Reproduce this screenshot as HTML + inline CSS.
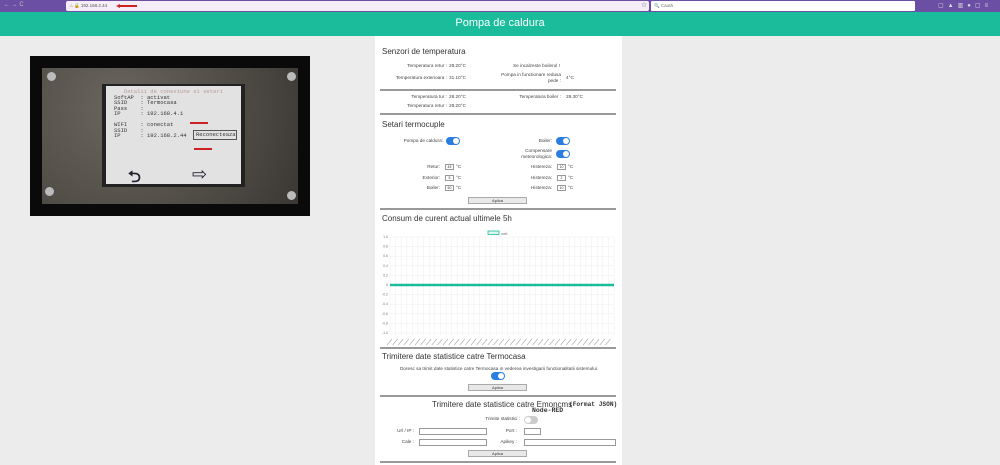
<!DOCTYPE html>
<html><head><meta charset="utf-8"><style>
*{margin:0;padding:0;box-sizing:border-box}
body{width:1000px;height:465px;overflow:hidden;background:#ececec;font-family:"Liberation Sans",Arial,sans-serif;position:relative;color:#333}
.a{position:absolute;white-space:nowrap}
.s{font-size:4.7px;color:#444}
.r{text-align:right}
.h{font-size:8px;color:#333}
.hr{position:absolute;left:380px;width:236px;height:1.5px;background:#999}
.tg{position:absolute;width:14px;height:8px;border-radius:4px;background:#2b7de1}
.tg::after{content:"";position:absolute;right:1px;top:1px;width:6px;height:6px;border-radius:50%;background:#fff}
.tg.off{background:#ccc}.tg.off::after{right:auto;left:1px}
.in{position:absolute;height:6px;border:1px solid #999;background:#fff;font-size:3.5px;text-align:center;line-height:4.5px}
.btn{position:absolute;width:59px;height:7px;background:#e8e8e8;border:1px solid #aaa;font-size:4px;text-align:center;line-height:5px}
</style></head><body>
<div class="a" style="left:0;top:0;width:1000px;height:12px;background:#6b4fa5"></div>
<div class="a" style="left:4px;top:2px;font-size:6px;color:#cbb">← → C</div>
<div class="a" style="left:66px;top:1px;width:583px;height:10px;background:#f5eef8;border-radius:2px"></div>
<div class="a" style="left:70px;top:3px;font-size:4.5px;color:#555">⌂ 🔒 192.168.2.44</div>
<div class="a" style="left:120px;top:5px;width:17px;height:1.5px;background:#c22"></div>
<div class="a" style="left:116px;top:3.5px;width:0;height:0;border-top:2.3px solid transparent;border-bottom:2.3px solid transparent;border-right:4px solid #c22"></div>
<div class="a" style="left:641px;top:1px;font-size:7px;color:#555">☆</div>
<div class="a" style="left:651px;top:1px;width:264px;height:10px;background:#fff;border-radius:1px"></div>
<div class="a" style="left:654px;top:3px;font-size:4.5px;color:#777">🔍 Caută</div>
<div class="a" style="left:938px;top:2px;font-size:6px;color:#ddd;letter-spacing:4px">▢▲▥●▢≡</div>
<div class="a" style="left:0;top:12px;width:1000px;height:24px;background:#1abc9c"></div>
<div class="a" style="left:0;top:17px;width:1000px;text-align:center;font-size:11px;color:#fff">Pompa de caldura</div>
<div class="a" style="left:375px;top:36px;width:247px;height:429px;background:#fff"></div>

<!-- photo -->
<div class="a" style="left:30px;top:56px;width:280px;height:160px;background:#0a0a0a"></div>
<div class="a" style="left:42px;top:68px;width:256px;height:136px;background:radial-gradient(circle at 30% 30%,#6a665f,#4a4640 70%,#3a3734)"></div>
<div class="a" style="left:47px;top:72px;width:9px;height:9px;border-radius:50%;background:#bbb"></div>
<div class="a" style="left:287px;top:72px;width:9px;height:9px;border-radius:50%;background:#bbb"></div>
<div class="a" style="left:45px;top:187px;width:9px;height:9px;border-radius:50%;background:#bbb"></div>
<div class="a" style="left:287px;top:191px;width:9px;height:9px;border-radius:50%;background:#bbb"></div>
<div class="a" style="left:102px;top:84px;width:143px;height:103px;background:#222;"></div>
<div class="a" style="left:106px;top:86px;width:135px;height:98px;background:#e2e2e2;font-family:'Liberation Mono',monospace;font-size:5.5px;line-height:5.5px;color:#333;padding:3px 8px;white-space:pre">   <span style="color:#b99">Detalii de conexiune si setari</span>
SoftAP  : activat
SSID    : Termocasa
Pass    :
IP      : 192.168.4.1

WIFI    : conectat
SSID    :
IP      : 192.168.2.44</div>
<div class="a" style="left:193px;top:130px;width:44px;height:10px;border:1px solid #555;font-family:'Liberation Mono',monospace;font-size:5.5px;line-height:8px;padding-left:2px;color:#333">Reconecteaza</div>
<div class="a" style="left:190px;top:122px;width:18px;height:1.5px;background:#c22"></div>
<div class="a" style="left:194px;top:148px;width:18px;height:1.5px;background:#c22"></div>
<div class="a" style="left:128px;top:166px;font-size:16px;color:#223;font-weight:bold">⮌</div>
<div class="a" style="left:192px;top:164px;font-size:18px;color:#223">⇨</div>

<!-- section 1 -->
<div class="a h" style="left:382px;top:47px">Senzori de temperatura</div>
<div class="a s r" style="left:380px;top:63px;width:67px">Temperatura retur :</div><div class="a s" style="left:449px;top:63px">28.20°C</div>
<div class="a s" style="left:513px;top:63px">Se incalzeste boilerul !</div>
<div class="a s r" style="left:380px;top:75px;width:67px">Temperatura exterioara :</div><div class="a s" style="left:449px;top:75px">31.10°C</div>
<div class="a s r" style="left:490px;top:72px;width:71px;line-height:6px;white-space:normal">Pompa in functionare redusa pede :</div><div class="a s" style="left:566px;top:75px">4°C</div>
<div class="hr" style="top:89px"></div>
<div class="a s r" style="left:380px;top:94px;width:67px">Temperatura tur :</div><div class="a s" style="left:449px;top:94px">28.20°C</div>
<div class="a s r" style="left:490px;top:94px;width:71px">Temperatura boiler :</div><div class="a s" style="left:566px;top:94px">28.30°C</div>
<div class="a s r" style="left:380px;top:103px;width:67px">Temperatura retur :</div><div class="a s" style="left:449px;top:103px">28.20°C</div>
<div class="hr" style="top:113px"></div>

<div class="a h" style="left:382px;top:120px">Setari termocuple</div>
<div class="a s r" style="left:380px;top:138px;width:63px">Pompa de caldura:</div><div class="tg" style="left:446px;top:137px"></div>
<div class="a s r" style="left:500px;top:138px;width:52px">Boiler:</div><div class="tg" style="left:556px;top:137px"></div>
<div class="a s r" style="left:500px;top:148px;width:52px;line-height:6px">Compensare<br>meteorologica:</div><div class="tg" style="left:556px;top:150px"></div>
<div class="a s r" style="left:400px;top:164px;width:40px">Retur:</div><div class="in" style="left:445px;top:164px;width:9px">45</div><div class="a s" style="left:456px;top:164px">°C</div>
<div class="a s r" style="left:400px;top:175px;width:40px">Exterior:</div><div class="in" style="left:445px;top:175px;width:9px">5</div><div class="a s" style="left:456px;top:175px">°C</div>
<div class="a s r" style="left:400px;top:185px;width:40px">Boiler:</div><div class="in" style="left:445px;top:185px;width:9px">50</div><div class="a s" style="left:456px;top:185px">°C</div>
<div class="a s r" style="left:510px;top:164px;width:42px">Histereza:</div><div class="in" style="left:557px;top:164px;width:9px">10</div><div class="a s" style="left:568px;top:164px">°C</div>
<div class="a s r" style="left:510px;top:175px;width:42px">Histereza:</div><div class="in" style="left:557px;top:175px;width:9px">2</div><div class="a s" style="left:568px;top:175px">°C</div>
<div class="a s r" style="left:510px;top:185px;width:42px">Histereza:</div><div class="in" style="left:557px;top:185px;width:9px">10</div><div class="a s" style="left:568px;top:185px">°C</div>
<div class="btn" style="left:468px;top:197px">Aplica</div>
<div class="hr" style="top:208px"></div>

<div class="a h" style="left:382px;top:214px">Consum de curent actual ultimele 5h</div>
<svg class="a" style="left:375px;top:228px" width="247" height="118" viewBox="0 0 247 118">
<rect x="113" y="3" width="11" height="3.5" fill="#e0f5f0" stroke="#1abc9c" stroke-width="0.8"/>
<text x="126" y="7" font-size="3.5" fill="#777" font-family="Liberation Sans">watt</text>
<g stroke="#eee" stroke-width="0.5">
<path d="M15 9H239M15 18.6H239M15 28.2H239M15 37.8H239M15 47.4H239M15 57H239M15 66.6H239M15 76.2H239M15 85.8H239M15 95.4H239M15 105H239"/>
<path d="M15 9V107M20.6 9V107M26.2 9V107M31.8 9V107M37.4 9V107M43 9V107M48.6 9V107M54.2 9V107M59.8 9V107M65.4 9V107M71 9V107M76.6 9V107M82.2 9V107M87.8 9V107M93.4 9V107M99 9V107M104.6 9V107M110.2 9V107M115.8 9V107M121.4 9V107M127 9V107M132.6 9V107M138.2 9V107M143.8 9V107M149.4 9V107M155 9V107M160.6 9V107M166.2 9V107M171.8 9V107M177.4 9V107M183 9V107M188.6 9V107M194.2 9V107M199.8 9V107M205.4 9V107M211 9V107M216.6 9V107M222.2 9V107M227.8 9V107M233.4 9V107M239 9V107"/>
</g>
<line x1="15" y1="57" x2="239" y2="57" stroke="#1abc9c" stroke-width="2.5"/>
<g font-size="3.5" fill="#777" font-family="Liberation Sans" text-anchor="end">
<text x="13" y="10">1.0</text><text x="13" y="19.6">0.8</text><text x="13" y="29.2">0.6</text><text x="13" y="38.8">0.4</text><text x="13" y="48.4">0.2</text><text x="13" y="58">0</text><text x="13" y="67.6">-0.2</text><text x="13" y="77.2">-0.4</text><text x="13" y="86.8">-0.6</text><text x="13" y="96.4">-0.8</text><text x="13" y="106">-1.0</text>
</g>
<g stroke="#aaa" stroke-width="0.6">
<path d="M12 117l5-6M17.6 117l5-6M23.2 117l5-6M28.8 117l5-6M34.4 117l5-6M40 117l5-6M45.6 117l5-6M51.2 117l5-6M56.8 117l5-6M62.4 117l5-6M68 117l5-6M73.6 117l5-6M79.2 117l5-6M84.8 117l5-6M90.4 117l5-6M96 117l5-6M101.6 117l5-6M107.2 117l5-6M112.8 117l5-6M118.4 117l5-6M124 117l5-6M129.6 117l5-6M135.2 117l5-6M140.8 117l5-6M146.4 117l5-6M152 117l5-6M157.6 117l5-6M163.2 117l5-6M168.8 117l5-6M174.4 117l5-6M180 117l5-6M185.6 117l5-6M191.2 117l5-6M196.8 117l5-6M202.4 117l5-6M208 117l5-6M213.6 117l5-6M219.2 117l5-6M224.8 117l5-6M230.4 117l5-6"/>
</g>
</svg>
<div class="hr" style="top:347px"></div>

<div class="a h" style="left:382px;top:352px">Trimitere date statistice catre Termocasa</div>
<div class="a s" style="left:400px;top:366px">Doresc sa trimit date statistice catre Termocasa in vederea investigarii functionalitatii sistemului.</div>
<div class="tg" style="left:491px;top:372px"></div>
<div class="btn" style="left:468px;top:384px">Aplica</div>
<div class="hr" style="top:395px"></div>

<div class="a h" style="left:432px;top:400px">Trimitere date statistice catre Emoncms</div>
<div class="a" style="left:569px;top:401px;font-family:'Liberation Mono',monospace;font-weight:bold;font-size:6.2px">(Format JSON)</div>
<div class="a" style="left:532px;top:407px;font-family:'Liberation Mono',monospace;font-weight:bold;font-size:6.5px">Node-RED</div>
<div class="a s r" style="left:460px;top:416px;width:60px">Trimite statistici :</div><div class="tg off" style="left:524px;top:416px"></div>
<div class="a s r" style="left:380px;top:428px;width:34px">Url / IP :</div><div class="in" style="left:419px;top:428px;width:68px;height:7px"></div>
<div class="a s r" style="left:480px;top:428px;width:37px">Port :</div><div class="in" style="left:524px;top:428px;width:17px;height:7px"></div>
<div class="a s r" style="left:380px;top:439px;width:34px">Cale :</div><div class="in" style="left:419px;top:439px;width:68px;height:7px"></div>
<div class="a s r" style="left:480px;top:439px;width:37px">Apikey :</div><div class="in" style="left:524px;top:439px;width:92px;height:7px"></div>
<div class="btn" style="left:468px;top:450px">Aplica</div>
<div class="hr" style="top:461px"></div>
</body></html>
